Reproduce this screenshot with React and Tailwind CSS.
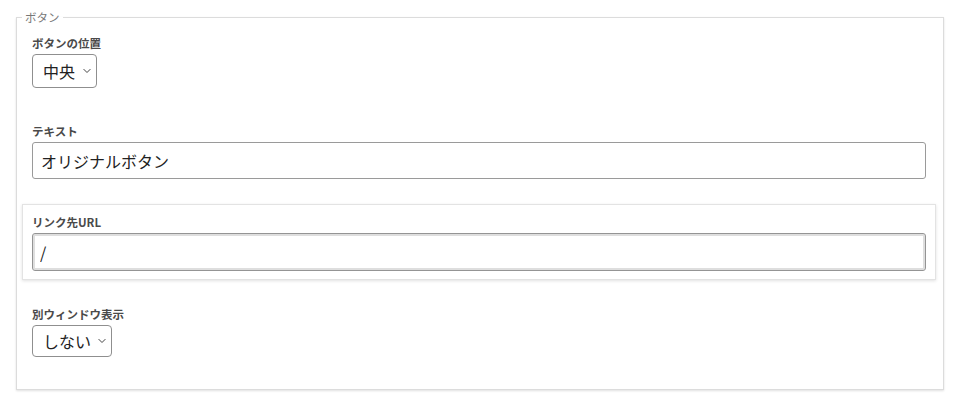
import { useState } from "react";

const FONT = { fontFamily: '"Noto Sans CJK JP", "Noto Sans", sans-serif' };

function Chevron() {
  return (
    <svg
      width="8"
      height="5"
      viewBox="0 0 8 5"
      className="pointer-events-none absolute right-[6px] top-1/2 -translate-y-1/2"
    >
      <path d="M0.6 0.6 L4 4 L7.4 0.6" fill="none" stroke="#444" strokeWidth="1" />
    </svg>
  );
}

function Select({ value, options, onChange, width }) {
  return (
    <div className={`relative ${width}`}>
      <select
        value={value}
        onChange={(e) => onChange(e.target.value)}
        className="h-full w-full appearance-none rounded-[4px] border border-[#8f8f8f] bg-white pl-[10px] pr-[20px] text-[16px] text-[#222] outline-none"
        style={FONT}
      >
        {options.map((o) => (
          <option key={o} value={o}>
            {o}
          </option>
        ))}
      </select>
      <Chevron />
    </div>
  );
}

function Row({ label, active, children }) {
  // I give the focused row a framed look like the editor does
  return (
    <div
      className={`border p-[9px] pb-[8px] ${
        active
          ? "border-[#e3e3e3] shadow-[0_1px_3px_rgba(0,0,0,0.12)]"
          : "border-transparent"
      }`}
    >
      <div className="mb-[3px] h-[16px] text-[11.5px] font-bold leading-[16px] text-[#4a4a4a]">
        {label}
      </div>
      {children}
    </div>
  );
}

export default function App() {
  const [position, setPosition] = useState("中央");
  const [text, setText] = useState("オリジナルボタン");
  const [url, setUrl] = useState("/");
  const [newWindow, setNewWindow] = useState("しない");

  return (
    <div className="min-h-screen bg-white pt-[9px] pl-[16px]" style={FONT}>
      <fieldset className="w-[928px] border border-[#dcdcdc] pl-[5px] pr-[7px] pb-[23px] shadow-[0_1px_2px_rgba(0,0,0,0.12)]">
        <legend className="px-[3px] text-[11.5px] leading-[16px] text-[#777]">ボタン</legend>

        <div className="flex flex-col gap-4">
          <Row label="ボタンの位置">
            <Select
              value={position}
              onChange={setPosition}
              options={["左", "中央", "右"]}
              width="h-[34px] w-[65px]"
            />
          </Row>

          <Row label="テキスト">
            <input
              value={text}
              onChange={(e) => setText(e.target.value)}
              className="block h-[37px] w-full rounded-[3px] border border-[#9a9a9a] px-[8px] text-[16px] text-[#222] outline-none"
              style={FONT}
            />
          </Row>

          <Row label="リンク先URL" active>
            <input
              value={url}
              onChange={(e) => setUrl(e.target.value)}
              className="block h-[38px] w-full rounded-[3px] border border-[#949494] px-[7px] text-[16px] text-[#222] shadow-[inset_0_0_0_2px_#dedede] outline-none"
              style={FONT}
            />
          </Row>

          <Row label="別ウィンドウ表示">
            <Select
              value={newWindow}
              onChange={setNewWindow}
              options={["しない", "する"]}
              width="h-[32px] w-[80px]"
            />
          </Row>
        </div>
      </fieldset>
    </div>
  );
}
